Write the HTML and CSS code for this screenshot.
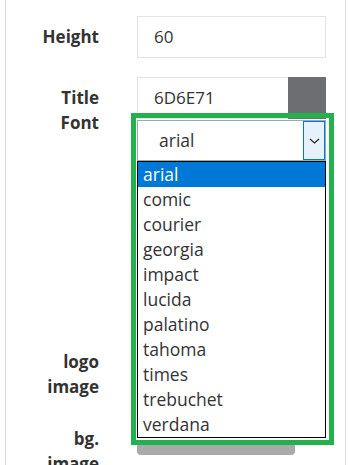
FILE: index.html
```html
<!DOCTYPE html>
<html>
<head>
<meta charset="utf-8">
<link rel="stylesheet" href="styles.css">
</head>
<body>
<div class="panel">
  <div class="row row-height">
    <div class="label">Height</div>
    <div class="field"><div class="input">60</div></div>
  </div>
  <div class="row row-font">
    <div class="label">Title<br>Font</div>
    <div class="field">
      <div class="color-input">
        <div class="color-text">6D6E71</div>
        <div class="swatch"></div>
      </div>
      <div class="select">
        <span class="select-value">arial</span>
        <span class="select-btn">
          <svg width="11" height="6" viewBox="0 0 11 6"><polyline points="1,1 5.5,5 10,1" fill="none" stroke="#222" stroke-width="1.1"/></svg>
        </span>
      </div>
    </div>
  </div>
  <div class="row row-logo">
    <div class="label">logo<br>image</div>
    <div class="field"></div>
  </div>
  <div class="row row-bg">
    <div class="label">bg.<br>image</div>
    <div class="field"><div class="upload"></div></div>
  </div>
</div>
<div class="highlight"></div>
<div class="listbox">
  <div class="opt selected">arial</div>
  <div class="opt">comic</div>
  <div class="opt">courier</div>
  <div class="opt">georgia</div>
  <div class="opt">impact</div>
  <div class="opt">lucida</div>
  <div class="opt">palatino</div>
  <div class="opt">tahoma</div>
  <div class="opt">times</div>
  <div class="opt">trebuchet</div>
  <div class="opt">verdana</div>
</div>
</body>
</html>
```

FILE: styles.css
```css
html, body {
  margin: 0;
  padding: 0;
  background: #fff;
  overflow: hidden;
}
body {
  font-family: "Open Sans", "Noto Sans", sans-serif;
  color: #333;
  height: 465px;
}
.panel {
  margin-left: 5px;
  width: 341px;
  height: 465px;
  box-sizing: border-box;
  border-left: 1px solid #dcdcdc;
  border-right: 1px solid #dcdcdc;
  padding-top: 16px;
  overflow: hidden;
}
.row {
  display: grid;
  grid-template-columns: 93px 189px;
  column-gap: 38px;
  margin-bottom: 19px;
}
.label {
  font-weight: 700;
  font-size: 17px;
  line-height: 25px;
  text-align: right;
  padding-top: 8px;
  color: #333;
}
.input {
  height: 42px;
  box-sizing: border-box;
  border: 1px solid #e3e3e3;
  padding-left: 16px;
  font-size: 17px;
  line-height: 40px;
}
.color-input {
  display: flex;
  height: 42px;
}
.color-text {
  width: 151px;
  box-sizing: border-box;
  border: 1px solid #e3e3e3;
  border-right: none;
  padding-left: 16px;
  font-size: 17px;
  line-height: 40px;
}
.swatch {
  flex: 1;
  background: #6d6e71;
}
.select {
  margin-top: 1px;
  height: 41px;
  box-sizing: border-box;
  border: 1px solid #8fb0ad;
  background: #fff;
  display: flex;
  align-items: stretch;
}
.select-value {
  flex: 1;
  padding-left: 21px;
  font-size: 17.5px;
  line-height: 39px;
}
.select-btn {
  width: 22px;
  box-sizing: border-box;
  background: #e5f1fb;
  border: 1px solid #0078d7;
  display: flex;
  align-items: center;
  justify-content: center;
}
.row-font {
  margin-bottom: 180px;
}
.row-logo .field {
  height: 56px;
}
.row-logo {
  margin-bottom: 19px;
}
.upload {
  margin-top: 7px;
  width: 158px;
  height: 30px;
  border-radius: 4px;
  background: #aaaaaa;
}
.highlight {
  position: absolute;
  left: 131px;
  top: 113px;
  width: 203px;
  height: 332px;
  box-sizing: border-box;
  border: 5px solid #22b14c;
}
.listbox {
  position: absolute;
  left: 137px;
  top: 161px;
  width: 189px;
  box-sizing: border-box;
  border: 1px solid #000;
  background: #fff;
  box-shadow: 0 2px 0 #fff;
}
.opt {
  height: 25px;
  padding-left: 5px;
  font-size: 17.5px;
  line-height: 25px;
  color: #333;
}
.opt.selected {
  background: #0078d7;
  color: #fff;
}
```
